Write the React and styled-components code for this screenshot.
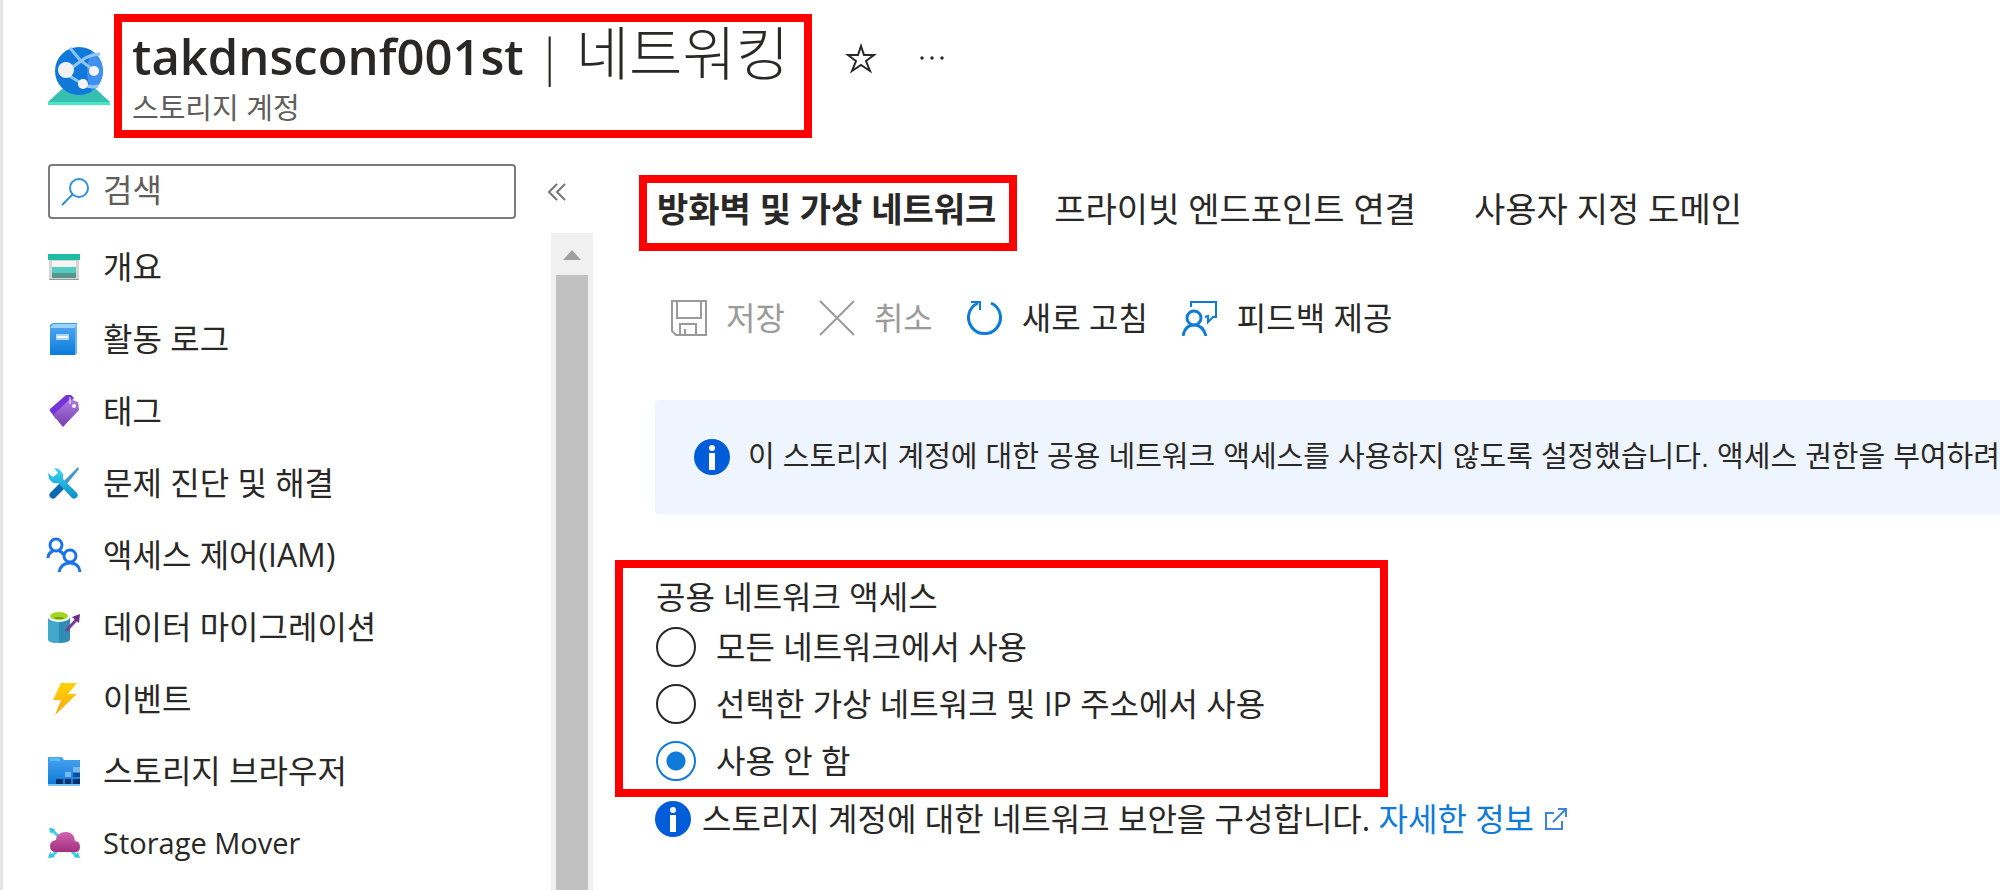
import React, { useState } from 'react'
import styled, { createGlobalStyle } from 'styled-components'

const menu = [
    { name : '개요', icon : 'overview' },
    { name : '활동 로그', icon : 'log' },
    { name : '태그', icon : 'tag' },
    { name : '문제 진단 및 해결', icon : 'tools' },
    { name : '액세스 제어(IAM)', icon : 'people' },
    { name : '데이터 마이그레이션', icon : 'migrate' },
    { name : '이벤트', icon : 'event' },
    { name : '스토리지 브라우저', icon : 'folder' },
    { name : 'Storage Mover', icon : 'mover', latin : true },
]

const tabs = ['방화벽 및 가상 네트워크', '프라이빗 엔드포인트 연결', '사용자 지정 도메인']

const options = ['모든 네트워크에서 사용', '선택한 가상 네트워크 및 IP 주소에서 사용', '사용 안 함']

const icons = {
    overview : <>
        <path d="M1 8h30v21H1z" fill="#d4d4d4"/>
        <path d="M4 10h24v6H4z" fill="#f5f5f5"/>
        <path d="M0 3h32v6H0z" fill="#1fbba6"/>
        <path d="M4 16h24v6H4z" fill="#52cdbd"/>
        <path d="M4 22h24v5H4z" fill="#55968d"/>
        <path d="M1 28h30v1H1z" fill="#999"/>
    </>,
    log : <>
        <path d="M2 2l3-2h24v30l-2 2H2z" fill="#3d9be6"/>
        <path d="M5 1h24l-2 4H2z" fill="#9bd2f8"/>
        <path d="M27 5l2-4v29l-2 2z" fill="#6bb5ec"/>
        <path d="M2 5h25v27H2z" fill="url(#blue)"/>
        <path d="M8 11h13v6H8z" fill="#a8d6fa"/>
        <path d="M9 13h11v2H9z" fill="#fff"/>
    </>,
    tag : <>
        <path d="M18 0h5l3 3-18 21-6-8q-1-1 0-2z" fill="#7434d8"/>
        <path d="M22 4l8 3 1 8L15 32 5 20z" fill="url(#purple)"/>
        <circle cx="26" cy="11" r="2" fill="#fff"/>
        <path d="M22 2v7" stroke="#fff" strokeWidth="1"/>
    </>,
    tools : <>
        <path d="M13 20L5 28" stroke="#0d68ac" strokeWidth="7" strokeLinecap="round"/>
        <path d="M30 0l1 2-4 5-9 11-3-3 10-10z" fill="#4398c9"/>
        <path d="M6 1l5 1 4 5v5l14 14q2 3-1 5t-5-1L10 16H5l-4-4-1-6 5 4 5-4z" fill="url(#cyan)"/>
    </>,
    people : <g fill="none" stroke="#1a73e8" strokeWidth="3">
        <circle cx="8" cy="6" r="6"/>
        <path d="M0 19q0-5 5-7M11 12q4 1 4 4"/>
        <circle cx="22" cy="17" r="6"/>
        <path d="M11 33q2-9 11-9t10 9"/>
    </g>,
    migrate : <>
        <path d="M0 6v22q0 4 11 4t11-4V6z" fill="#2f8cb5"/>
        <path d="M0 6v22q0 4 11 4V6z" fill="#42a6cd"/>
        <ellipse cx="11" cy="6" rx="11" ry="5" fill="#fff"/>
        <ellipse cx="11" cy="5" rx="9" ry="4" fill="#a4d522"/>
        <ellipse cx="11" cy="7" rx="5" ry="1" fill="#6b9f13"/>
        <path d="M18 20L30 7" stroke="#793c97" strokeWidth="3"/>
        <path d="M24 6l8-3-1 9z" fill="#6b2c8a"/>
    </>,
    event : <path d="M13 0h16l-9 11h9L7 32l6-15H5z" fill="url(#gold)"/>,
    folder : <>
        <path d="M0 2h14l2 3h16v25H0z" fill="url(#blue)"/>
        <path d="M2 3h10v3H2z" fill="#56bcf5"/>
        <path d="M0 29h32v2H0z" fill="#7ac5f6"/>
        <path d="M25 12h7v5h-7zM17 17h6v5h-6z" fill="#77b8f3"/>
        <path d="M25 18h7v4h-7z" fill="#0b4e99"/>
        <path d="M8 24h7v5H8zM17 24h6v5h-6zM25 24h7v5h-7z" fill="#062f6b"/>
    </>,
    mover : <>
        <path d="M3 2l7 7M3 30l8-8M29 30l-7-8" stroke="#45cdeb" strokeWidth="3"/>
        <path d="M1 1l6 1-4 5zM0 31l2-6 5 5zM32 31l-6-1 4-5z" fill="#32c4e6"/>
        <path d="M8 25q-6 0-6-6 0-5 6-6 1-8 10-8 8 0 9 9 5 0 5 6 0 5-5 5z" fill="url(#pink)"/>
    </>,
}

function Gradients() {
    const list = [
        ['blue', '#4aa3ee', '#0a7bda'],
        ['purple', '#b27be6', '#7440ae'],
        ['cyan', '#3bd5f8', '#0b8fc4'],
        ['gold', '#ffd300', '#fba71b'],
        ['pink', '#d063af', '#a1317f'],
    ];
    return (
        <HiddenSvg aria-hidden="true">
            <defs>
                {list.map(([id, from, to]) => (
                    <linearGradient key={id} id={id} x1="0" y1="0" x2="0" y2="1">
                        <stop offset="0" stopColor={from}/>
                        <stop offset="1" stopColor={to}/>
                    </linearGradient>
                ))}
            </defs>
        </HiddenSvg>
    );
}

function StorageLogo() {
    return (
        <svg width="62" height="60" viewBox="0 0 62 60">
            <path d="M14 43h34l14 13H0z" fill="#36bfae"/>
            <path d="M0 56h62v3H0z" fill="#46e6c8"/>
            <circle cx="31" cy="25" r="24" fill="#0f78d8"/>
            <path d="M44 5a24 24 0 0 1 0 40q-10-18 0-40z" fill="#4190ed"/>
            <path d="M22 2l10 12 16 12M52 8q-12 1-19 7L18 26M20 29l16 10q8 3 14 1" fill="none" stroke="#8fc4f5" strokeWidth="3"/>
            <circle cx="18" cy="24" r="8" fill="#f1f1f1"/>
            <circle cx="46" cy="25" r="5" fill="#f4f4f4"/>
            <circle cx="35" cy="38" r="5" fill="#f4f4f4"/>
        </svg>
    );
}

function InfoIcon() {
    return (
        <svg width="36" height="36" viewBox="0 0 36 36">
            <circle cx="18" cy="18" r="18" fill="#015cda"/>
            <circle cx="18" cy="9" r="3" fill="#fff"/>
            <path d="M15 14h6v17h-6z" fill="#fff"/>
        </svg>
    );
}

function App() {
    const [selected, setSelected] = useState(2);
    const [search, setSearch] = useState('');

    return (
        <StPage>
            <GlobalStyle/>
            <Gradients/>
            <StHeader>
                <StorageLogo/>
                <TitleBox>
                    <StTitle><b>takdnsconf001st</b> | <span>네트워킹</span></StTitle>
                    <StSub>스토리지 계정</StSub>
                </TitleBox>
                <HeaderBtns>
                    <IconBtn aria-label="즐겨찾기">
                        <svg width="32" height="32" viewBox="0 0 32 32" fill="none" stroke="#292827" strokeWidth="2">
                            <path d="M16 4l3 9h10l-8 6 4 10-9-6-9 6 4-10-8-6h10z"/>
                        </svg>
                    </IconBtn>
                    <IconBtn aria-label="더 보기">
                        <svg width="26" height="6" viewBox="0 0 26 6" fill="#292827">
                            <circle cx="3" cy="3" r="1.7"/><circle cx="13" cy="3" r="1.7"/><circle cx="23" cy="3" r="1.7"/>
                        </svg>
                    </IconBtn>
                </HeaderBtns>
            </StHeader>
            <StBody>
                <StSide>
                    <SearchRow>
                        <SearchBox>
                            <svg width="28" height="28" viewBox="0 0 28 28" fill="none" stroke="#2d8fe0" strokeWidth="2">
                                <circle cx="18" cy="10" r="9"/><path d="M12 16L1 27"/>
                            </svg>
                            <input type="text" aria-label="검색" placeholder="검색" value={search}
                                onChange={(event) => {setSearch(event.target.value)}}/>
                        </SearchBox>
                        <IconBtn aria-label="메뉴 접기">
                            <svg width="18" height="18" viewBox="0 0 18 18" fill="none" stroke="#777" strokeWidth="2">
                                <path d="M9 1L1 9l8 8M17 1L9 9l8 8"/>
                            </svg>
                        </IconBtn>
                    </SearchRow>
                    <MenuArea>
                        <MenuList>
                            {menu.map((item) => (
                                <MenuLink href="#" key={item.name} $latin={item.latin}>
                                    <svg width="32" height="32" viewBox="0 0 32 32" overflow="visible">{icons[item.icon]}</svg>
                                    {item.name}
                                </MenuLink>
                            ))}
                        </MenuList>
                        <ScrollTrack>
                            <svg width="18" height="10" viewBox="0 0 18 10"><path d="M9 0l9 10H0z" fill="#a0a0a0"/></svg>
                            <ScrollThumb/>
                        </ScrollTrack>
                    </MenuArea>
                </StSide>
                <StMain>
                    <TabRow>
                        {tabs.map((tab, index) => (
                            <TabBtn key={tab} $active={index === 0}>{tab}</TabBtn>
                        ))}
                    </TabRow>
                    <ToolRow>
                        <ToolBtn disabled>
                            <svg width="36" height="36" viewBox="0 0 36 36" fill="none" stroke="#9a9a9a" strokeWidth="2">
                                <path d="M1 1h34v34H5l-4-4zM6 1v17h24V1M9 35V24h16v11M14 35v-6"/>
                            </svg>
                            저장
                        </ToolBtn>
                        <ToolBtn disabled>
                            <svg width="36" height="36" viewBox="0 0 36 36" fill="none" stroke="#9a9a9a" strokeWidth="2">
                                <path d="M1 1l34 34M35 1L1 35"/>
                            </svg>
                            취소
                        </ToolBtn>
                        <ToolBtn>
                            <svg width="36" height="36" viewBox="0 0 36 36" fill="none" stroke="#0f7bd8" strokeWidth="3">
                                <path d="M24 3a16 16 0 1 1-13 0"/>
                                <path d="M4 2h9v8" strokeWidth="2"/>
                            </svg>
                            새로 고침
                        </ToolBtn>
                        <ToolBtn>
                            <svg width="36" height="36" viewBox="0 0 36 36" fill="none" stroke="#0f7bd8" strokeWidth="3">
                                <circle cx="12" cy="18" r="7"/>
                                <path d="M1 36q2-11 11-11t12 11"/>
                                <path d="M9 7V2h25v15h-3l-5 5v-6l-3 1" strokeWidth="2"/>
                            </svg>
                            피드백 제공
                        </ToolBtn>
                    </ToolRow>
                    <InfoBar>
                        <InfoIcon/>
                        <span>이 스토리지 계정에 대한 공용 네트워크 액세스를 사용하지 않도록 설정했습니다. 액세스 권한을 부여하려</span>
                    </InfoBar>
                    <AccessBox>
                        <legend>공용 네트워크 액세스</legend>
                        {options.map((option, index) => (
                            <RadioLabel key={option}>
                                <input type="radio" name="access" checked={selected === index}
                                    onChange={() => {setSelected(index)}}/>
                                {option}
                            </RadioLabel>
                        ))}
                    </AccessBox>
                    <NoteRow>
                        <InfoIcon/>
                        <span>스토리지 계정에 대한 네트워크 보안을 구성합니다. <a href="#">자세한 정보</a></span>
                        <svg width="22" height="22" viewBox="0 0 22 22" fill="none" stroke="#3f83dc" strokeWidth="2">
                            <path d="M9 5H1v16h16v-8M8 14L20 2M13 1h8v8"/>
                        </svg>
                    </NoteRow>
                </StMain>
            </StBody>
        </StPage>
    );
}

const GlobalStyle = createGlobalStyle`
    * {
        box-sizing: border-box;
    }
    body {
        margin: 0;
        background: #ffffff;
        overflow: hidden;
    }
    body, button, input {
        font-family: "Open Sans", "Noto Sans CJK KR", sans-serif;
        color: #292827;
    }
    svg {
        flex-shrink: 0;
    }
`
const HiddenSvg = styled.svg`
    position: absolute;
    width: 0;
    height: 0;
`
const StPage = styled.div`
    display: flex;
    flex-direction: column;
    height: 100vh;
    border-left: 3px solid #e4e4e4;
    overflow: hidden;
`
const StHeader = styled.header`
    display: flex;
    align-items: flex-start;
    padding: 14px 0 0 45px;

    > svg {
        margin-top: 32px;
    }
`
const TitleBox = styled.div`
    width: 698px;
    height: 124px;
    margin-left: 4px;
    padding: 0 10px;
    border: 8px solid #ff0000;
`
const StTitle = styled.h1`
    margin: 0;
    font-size: 49px;
    line-height: 69px;
    font-weight: 300;
    white-space: nowrap;

    b {
        font-weight: 600;
    }
    span {
        font-size: 58px;
        line-height: 60px;
    }
`
const StSub = styled.div`
    font-size: 29px;
    line-height: 34px;
    color: #605e5c;
`
const HeaderBtns = styled.div`
    display: flex;
    gap: 42px;
    padding: 28px 0 0 33px;
`
const IconBtn = styled.button`
    display: flex;
    align-items: center;
    justify-content: center;
    height: 32px;
    padding: 0;
    border: none;
    background: transparent;
    cursor: pointer;
`
const StBody = styled.div`
    display: flex;
    flex: 1;
    min-height: 0;
`
const StSide = styled.aside`
    display: flex;
    flex-direction: column;
    width: 590px;
    padding: 26px 0 0 45px;
`
const SearchRow = styled.div`
    display: flex;
    align-items: center;
    gap: 32px;
`
const SearchBox = styled.label`
    display: flex;
    align-items: center;
    gap: 14px;
    width: 468px;
    height: 55px;
    padding: 0 11px;
    border: 2px solid #7d7c7b;
    border-radius: 4px;

    input {
        flex: 1;
        min-width: 0;
        padding: 0 0 4px;
        border: none;
        outline: none;
        font-size: 32px;
        line-height: 40px;
    }
    input::placeholder {
        color: #605e5c;
        opacity: 1;
    }
`
const MenuArea = styled.div`
    display: flex;
    flex: 1;
    justify-content: space-between;
    min-height: 0;
    padding-top: 14px;
`
const MenuList = styled.nav`
    display: flex;
    flex-direction: column;
    margin-top: -2px;
`
const MenuLink = styled.a`
    display: flex;
    flex-shrink: 0;
    align-items: center;
    gap: 23px;
    height: 72px;
    font-size: ${({ $latin }) => $latin ? '29px' : '32px'};
    line-height: 40px;
    color: #292827;
    text-decoration: none;
    white-space: nowrap;
`
const ScrollTrack = styled.div`
    display: flex;
    flex-direction: column;
    align-items: center;
    gap: 15px;
    width: 42px;
    padding-top: 17px;
    background: #f0f0f0;
`
const ScrollThumb = styled.div`
    flex: 1;
    width: 32px;
    background: #c1c1c1;
`
const StMain = styled.main`
    flex: 1;
    min-width: 0;
    padding: 37px 0 0 22px;
`
const TabRow = styled.div`
    display: flex;
    gap: 19px;
    margin-left: 24px;
`
const TabBtn = styled.button`
    height: 76px;
    padding: 0 13px 8px 10px;
    border: 8px solid ${({ $active }) => $active ? '#ff0000' : 'transparent'};
    background: transparent;
    font-size: 34px;
    line-height: 40px;
    font-weight: ${({ $active }) => $active ? 700 : 400};
    white-space: nowrap;
    cursor: pointer;
`
const ToolRow = styled.div`
    display: flex;
    gap: 34px;
    margin: 45px 0 0 56px;
`
const ToolBtn = styled.button`
    display: flex;
    align-items: center;
    gap: 19px;
    height: 44px;
    padding: 0;
    border: none;
    background: transparent;
    font-size: 32px;
    line-height: 40px;
    white-space: nowrap;
    cursor: pointer;

    &:disabled{
        color: #9a9a9a;
    }
`
const InfoBar = styled.div`
    display: flex;
    align-items: center;
    gap: 18px;
    height: 114px;
    margin: 60px 0 0 40px;
    padding-left: 39px;
    background: #eff5ff;
    border-radius: 4px 0 0 4px;
    font-family: "Liberation Sans", "Noto Sans CJK KR", sans-serif;
    font-size: 29px;
    line-height: 40px;
    white-space: nowrap;
    overflow: hidden;
`
const AccessBox = styled.fieldset`
    display: flex;
    flex-direction: column;
    width: 773px;
    margin: 46px 0 0;
    padding: 8px 33px 0;
    border: 8px solid #ff0000;
    font-size: 32px;

    legend {
        float: left;
        padding: 0;
        line-height: 42px;
    }
`
const RadioLabel = styled.label`
    display: flex;
    align-items: center;
    gap: 20px;
    height: 57px;
    line-height: 40px;

    input {
        appearance: none;
        width: 40px;
        height: 40px;
        margin: 0;
        border: 2px solid #292827;
        border-radius: 50%;
    }
    input:checked {
        border-color: #0f7bd8;
        background: radial-gradient(circle, #0f7bd8 9px, transparent 10px);
    }
`
const NoteRow = styled.div`
    display: flex;
    align-items: center;
    gap: 11px;
    margin: 2px 0 0 40px;
    font-size: 32px;
    line-height: 40px;
    white-space: nowrap;

    a {
        color: #0f7bd8;
        text-decoration: none;
    }
`

export default App
